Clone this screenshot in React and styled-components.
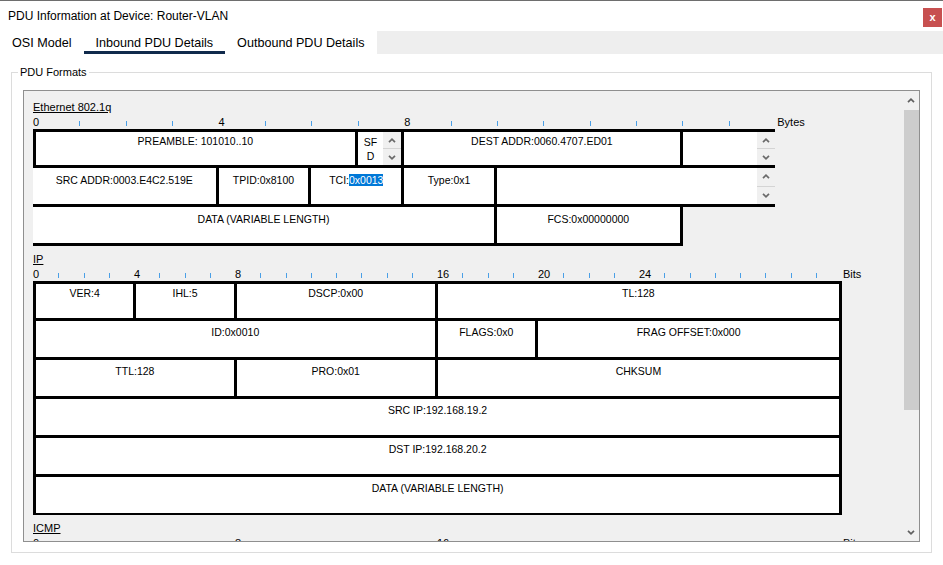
import React from 'react';
import styled, { createGlobalStyle } from 'styled-components';

const GlobalStyle = createGlobalStyle`
  html, body { margin: 0; padding: 0; background: #fff; }
  body { font-family: "Liberation Sans", Arial, sans-serif; color: #000; }
  * { box-sizing: border-box; }
`;

const BYTE = 46.4;
const BIT = 25.1;
const RULE_BIT = 25.25;

/* ── WINDOW ── */
const Window = styled.div`
  width: 943px;
  height: 565px;
  background: #fff;
  border-top: 1px solid #6e6e6e;
  display: flex;
  flex-direction: column;
  overflow: hidden;
`;

const TitleBar = styled.div`
  height: 30px;
  display: flex;
  align-items: center;
  justify-content: space-between;
  padding: 0 1px 0 8px;
`;

const Title = styled.span`
  font-size: 12px;
  line-height: 14px;
`;

const CloseBtn = styled.div`
  align-self: flex-start;
  margin-top: 7px;
  width: 19px; height: 19px;
  background: #c75050;
  color: #fff;
  font-size: 11px; font-weight: 700;
  display: flex; align-items: center; justify-content: center;
  line-height: 1;
`;

/* ── TABS ── */
const TabBar = styled.div`
  display: flex;
  height: 23px;
`;

const Tab = styled.div`
  height: 23px;
  padding: 4px 12px 0;
  font-size: 12.6px;
  line-height: 16px;
  border-bottom: 3px solid ${p => p.$active ? '#102a4c' : 'transparent'};
  white-space: nowrap;
`;

const TabFill = styled.div`
  flex: 1;
  background: #eeeeee;
`;

/* ── GROUP BOX ── */
const GroupBox = styled.div`
  position: relative;
  margin: 18px 11px 0 11px;
  height: 481px;
  border: 1px solid #dcdcdc;
  padding: 17px 11px 10px 11px;
  display: flex;
`;

const Legend = styled.span`
  position: absolute;
  top: -7px; left: 6px;
  padding: 0 2px;
  background: #fff;
  font-size: 11px;
  line-height: 13px;
`;

const Pane = styled.div`
  flex: 1;
  display: flex;
  border: 1px solid #8f8f8f;
  background: #f0f0f0;
  min-width: 0;
`;

const Viewport = styled.div`
  flex: 1;
  overflow: hidden;
  padding: 9px 0 0 9px;
  min-width: 0;
`;

const ScrollBar = styled.div`
  width: 16px;
  flex: none;
  display: flex;
  flex-direction: column;
  background: #f0f0f0;
`;

const ScrollBtn = styled.div`
  height: ${p => p.$h}px;
  display: flex; align-items: center; justify-content: center;
`;

const Thumb = styled.div`
  height: 300px;
  margin: 0 0 0 1px;
  background: #cdcdcd;
`;

const ScrollSpace = styled.div`flex: 1;`;

/* ── PDU SECTIONS ── */
const Section = styled.div`
  & + & { margin-top: 6px; }
`;

const SectionTitle = styled.div`
  font-size: 11px;
  line-height: 14px;
  text-decoration: underline;
`;

const Ruler = styled.div`
  display: flex;
  align-items: flex-end;
  height: 15px;
`;

const RulerSeg = styled.div`
  flex: none;
  width: ${p => p.$w}px;
  height: 15px;
  display: flex;
  align-items: flex-end;
`;

const RulerLabel = styled.span`
  font-size: 11px;
  line-height: 12px;
  margin-bottom: 1px;
  margin-left: ${p => p.$unit ? 2 : 0}px;
  white-space: nowrap;
`;

const Tick = styled.span`
  width: 1px;
  height: 5px;
  margin-bottom: 3px;
  background: #4a9fe6;
`;

const EthRow = styled.div`
  display: flex;
  width: max-content;
  height: 39px;
  border-bottom: 3px solid #000;
  ${p => p.$first && 'border-top: 3px solid #000;'}
`;

const Cell = styled.div`
  flex: none;
  width: ${p => p.$w}px;
  display: flex;
  background: #fff;
  border-right: ${p => p.$open ? 'none' : '3px solid #000'};
  ${p => p.$left && 'border-left: 3px solid #000;'}
`;

const CellText = styled.div`
  flex: 1;
  min-width: 0;
  text-align: center;
  font-size: 10.5px;
  line-height: ${p => p.$lh || 13}px;
  padding-top: ${p => p.$pt}px;
  white-space: nowrap;
`;

const Selected = styled.span`
  background: #0078d7;
  color: #fff;
`;

const Spinner = styled.div`
  width: 18px;
  flex: none;
  background: #f0f0f0;
  display: flex;
  flex-direction: column;
`;

const SpinHalf = styled.div`
  flex: 1;
  display: flex; align-items: center; justify-content: center;
  & + & { border-top: 1px solid #d4d4d4; }
`;

const IpTable = styled.div`
  width: max-content;
  border: 3px solid #000;
  border-bottom-width: 2px;
  background: #fff;
`;

const IpRow = styled.div`
  display: flex;
  height: 34px;
  & + & { border-top: 3px solid #000; height: 39px; }
`;

/* ─────────────────────────────────────────────
   ICONS
───────────────────────────────────────────── */
const Chevron = ({ up, color = '#606060', w = 8 }) => (
  <svg width={w} height="5" viewBox="0 0 8 5">
    <polyline
      points={up ? '1,4.2 4,1.2 7,4.2' : '1,0.8 4,3.8 7,0.8'}
      fill="none" stroke={color} strokeWidth="1.7"
    />
  </svg>
);

const Spin = () => (
  <Spinner>
    <SpinHalf><Chevron up color="#6a6a6a" /></SpinHalf>
    <SpinHalf><Chevron color="#6a6a6a" /></SpinHalf>
  </Spinner>
);

/* ─────────────────────────────────────────────
   DATA
───────────────────────────────────────────── */
const ETH_ROWS = [
  [
    { n: 7, text: 'PREAMBLE: 101010..10', left: true },
    { n: 1, text: <>SF<br />D</>, spin: true, lh: 14 },
    { n: 6, text: 'DEST ADDR:0060.4707.ED01' },
    { n: 2, text: '', spin: true, open: true },
  ],
  [
    { n: 4, text: 'SRC ADDR:0003.E4C2.519E' },
    { n: 2, text: 'TPID:0x8100' },
    { n: 2, text: <>TCI:<Selected>0x0013</Selected></> },
    { n: 2, text: 'Type:0x1' },
    { n: 6, text: '', spin: true, open: true },
  ],
  [
    { n: 10, text: 'DATA (VARIABLE LENGTH)' },
    { n: 4, text: 'FCS:0x00000000' },
  ],
];

const IP_ROWS = [
  [{ n: 4, text: 'VER:4' }, { n: 4, text: 'IHL:5' }, { n: 8, text: 'DSCP:0x00' }, { n: 16, text: 'TL:128' }],
  [{ n: 16, text: 'ID:0x0010' }, { n: 4, text: 'FLAGS:0x0' }, { n: 12, text: 'FRAG OFFSET:0x000' }],
  [{ n: 8, text: 'TTL:128' }, { n: 8, text: 'PRO:0x01' }, { n: 16, text: 'CHKSUM' }],
  [{ n: 32, text: 'SRC IP:192.168.19.2' }],
  [{ n: 32, text: 'DST IP:192.168.20.2' }],
  [{ n: 32, text: 'DATA (VARIABLE LENGTH)' }],
];

const ICMP_ROWS = [
  [{ n: 8, text: 'TYPE:0x08' }, { n: 8, text: 'CODE:0x00' }, { n: 16, text: 'CHECKSUM' }],
  [{ n: 16, text: 'ID:0x0002' }, { n: 16, text: 'SEQ NUMBER:0x0001' }],
];

/* ─────────────────────────────────────────────
   PARTS
───────────────────────────────────────────── */
function RulerLine({ count, unit, labels, unitName }) {
  return (
    <Ruler>
      {Array.from({ length: count }, (_, i) => (
        <RulerSeg key={i} $w={unit}>
          {labels.includes(i) ? <RulerLabel>{i}</RulerLabel> : <Tick />}
        </RulerSeg>
      ))}
      <RulerSeg $w={40}><RulerLabel $unit>{unitName}</RulerLabel></RulerSeg>
    </Ruler>
  );
}

function BitTable({ rows }) {
  return (
    <IpTable>
      {rows.map((row, r) => (
        <IpRow key={r}>
          {row.map((c, i) => (
            <Cell key={i} $w={c.n * BIT} $open={i === row.length - 1}>
              <CellText $pt={r === 0 ? 3 : 5}>{c.text}</CellText>
            </Cell>
          ))}
        </IpRow>
      ))}
    </IpTable>
  );
}

/* ─────────────────────────────────────────────
   COMPONENT
───────────────────────────────────────────── */
export default function App() {
  return (
    <>
      <GlobalStyle />
      <Window>
        <TitleBar>
          <Title>PDU Information at Device: Router-VLAN</Title>
          <CloseBtn>x</CloseBtn>
        </TitleBar>

        <TabBar>
          <Tab>OSI Model</Tab>
          <Tab $active>Inbound PDU Details</Tab>
          <Tab>Outbound PDU Details</Tab>
          <TabFill />
        </TabBar>

        <GroupBox>
          <Legend>PDU Formats</Legend>
          <Pane>
            <Viewport>
              <Section>
                <SectionTitle>Ethernet 802.1q</SectionTitle>
                <RulerLine count={16} unit={BYTE} labels={[0, 4, 8]} unitName="Bytes" />
                {ETH_ROWS.map((row, r) => (
                  <EthRow key={r} $first={r === 0}>
                    {row.map((c, i) => (
                      <Cell key={i} $w={c.n * BYTE} $open={c.open} $left={c.left}>
                        <CellText $pt={r === 0 ? 3 : 6} $lh={c.lh}>{c.text}</CellText>
                        {c.spin && <Spin />}
                      </Cell>
                    ))}
                  </EthRow>
                ))}
              </Section>

              <Section>
                <SectionTitle>IP</SectionTitle>
                <RulerLine count={32} unit={RULE_BIT} labels={[0, 4, 8, 16, 20, 24]} unitName="Bits" />
                <BitTable rows={IP_ROWS} />
              </Section>

              <Section>
                <SectionTitle>ICMP</SectionTitle>
                <RulerLine count={32} unit={RULE_BIT} labels={[0, 8, 16]} unitName="Bits" />
                <BitTable rows={ICMP_ROWS} />
              </Section>
            </Viewport>

            <ScrollBar>
              <ScrollBtn $h={19}><Chevron up /></ScrollBtn>
              <Thumb />
              <ScrollSpace />
              <ScrollBtn $h={17}><Chevron /></ScrollBtn>
            </ScrollBar>
          </Pane>
        </GroupBox>
      </Window>
    </>
  );
}
